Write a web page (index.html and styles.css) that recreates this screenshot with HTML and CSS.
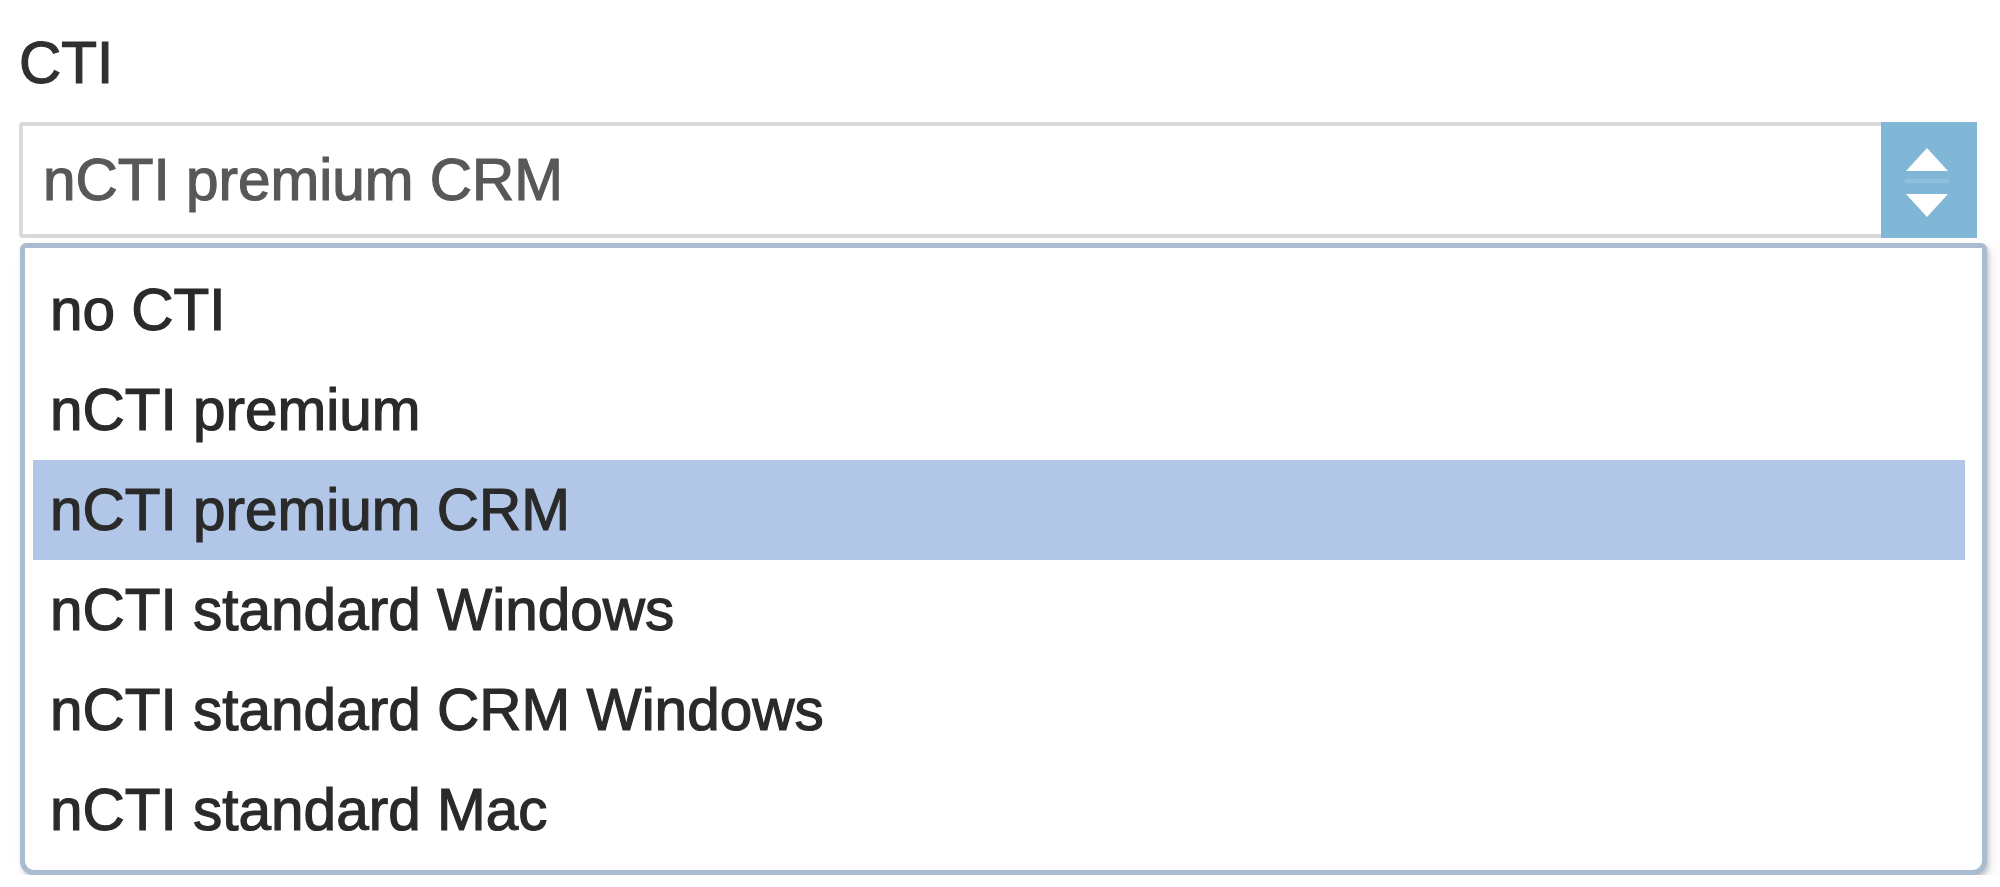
FILE: index.html
```html
<!DOCTYPE html>
<html>
<head>
<meta charset="utf-8">
<link rel="stylesheet" href="styles.css">
</head>
<body>
<div class="field">
  <div class="label">CTI</div>
  <div class="select">
    <div class="select-value">nCTI premium CRM</div>
    <div class="select-button">
      <svg width="96" height="115" viewBox="0 0 96 115">
        <polygon points="25,48 67,48 46,25" fill="#ffffff"/>
        <rect x="24" y="56" width="44" height="4" fill="#8fc0dc"/>
        <polygon points="25,71 67,71 46,94" fill="#ffffff"/>
      </svg>
    </div>
  </div>
  <ul class="dropdown">
    <li class="option">no CTI</li>
    <li class="option">nCTI premium</li>
    <li class="option selected">nCTI premium CRM</li>
    <li class="option">nCTI standard Windows</li>
    <li class="option">nCTI standard CRM Windows</li>
    <li class="option">nCTI standard Mac</li>
  </ul>
</div>
</body>
</html>
```
FILE: styles.css
```css
html, body {
  margin: 0;
  padding: 0;
  background: #ffffff;
}

body {
  font-family: "Liberation Sans", Arial, sans-serif;
  font-size: 58.5px;
  color: #333333;
  overflow: hidden;
  -webkit-text-stroke: 1.2px currentColor;
}

.field {
  padding: 30px 0 0 19px;
  width: 1968px;
}

.label {
  line-height: 65px;
  color: #303030;
  margin-bottom: 27px;
}

.select {
  display: flex;
  width: 1958px;
  height: 116px;
  box-sizing: border-box;
}

.select-value {
  flex: 1;
  border: 4px solid #d9d9d9;
  border-right: none;
  border-radius: 4px 0 0 4px;
  padding-left: 20px;
  line-height: 108px;
  color: #585858;
  background: #ffffff;
}

.select-button {
  width: 96px;
  height: 116px;
  background: #80b6d6;
  display: flex;
  align-items: center;
  justify-content: center;
}

.select-button svg {
  display: block;
}

.dropdown {
  list-style: none;
  margin: 5px 0 0 1px;
  padding: 12px 17px 10px 8px;
  width: 1967px;
  box-sizing: border-box;
  border: 5px solid #aabdd0;
  border-radius: 6px 6px 14px 14px;
  background: #ffffff;
  box-shadow: 2px 3px 4px rgba(0, 0, 0, 0.18), 4px 6px 14px rgba(0, 0, 0, 0.08);
}

.option {
  height: 100px;
  line-height: 100px;
  padding-left: 17px;
  color: #2a2a2a;
}

.option.selected {
  background: #b2c6e7;
}
```
